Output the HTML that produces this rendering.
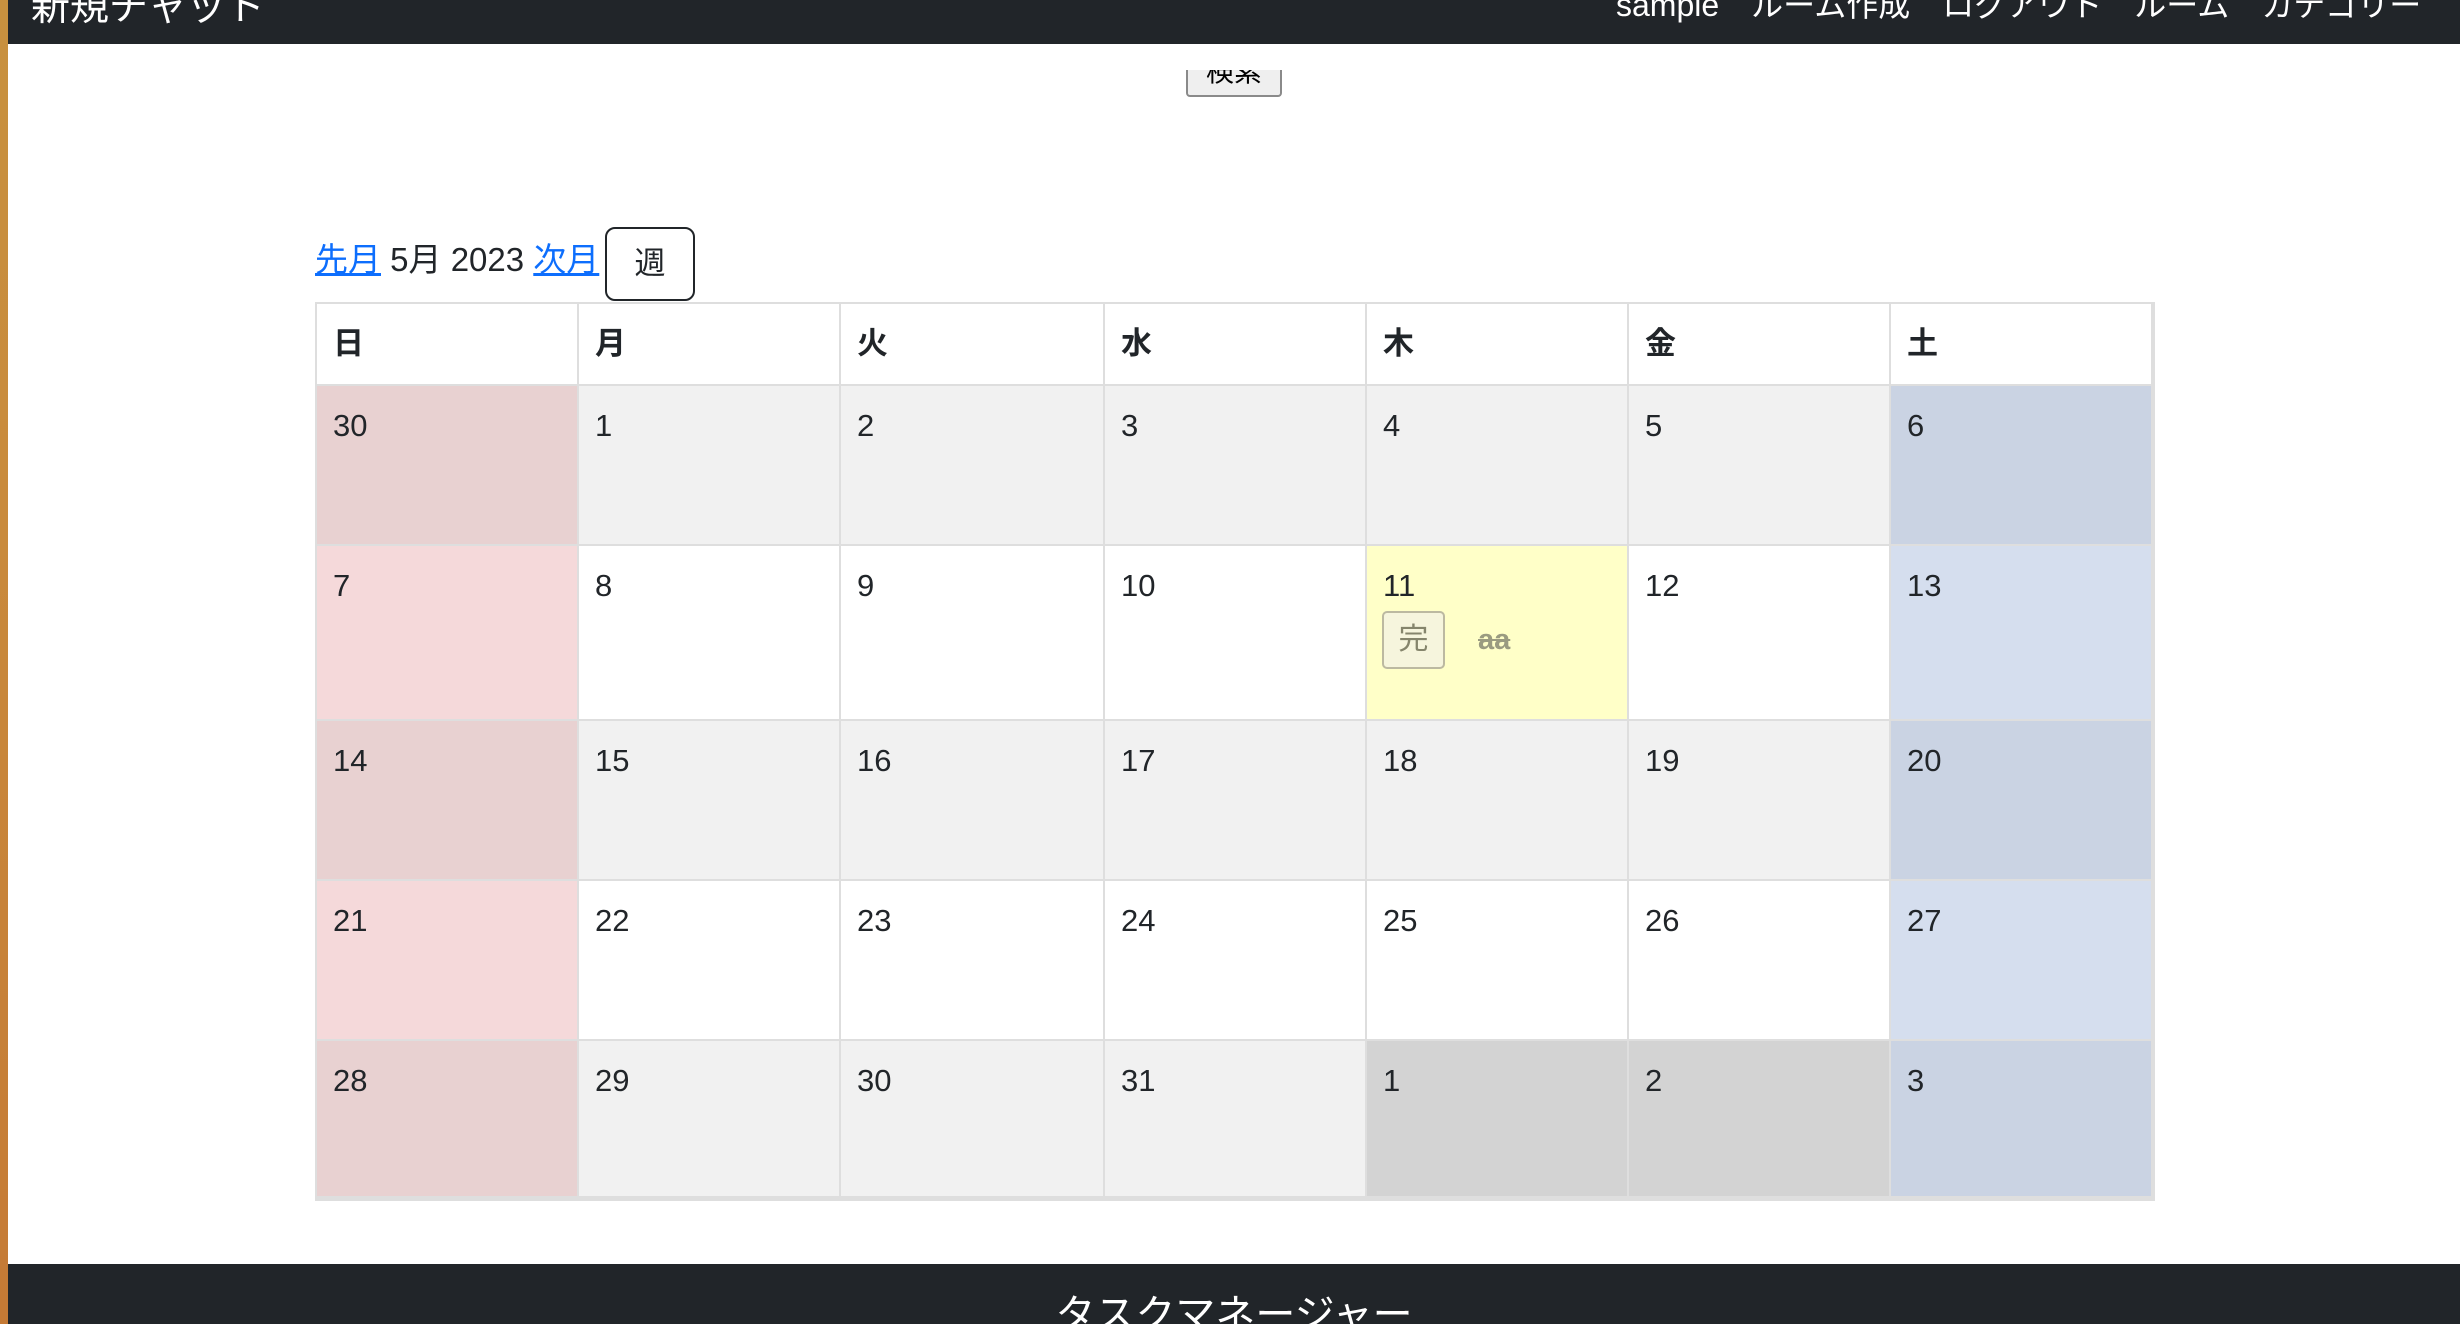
<!DOCTYPE html>
<html><head><meta charset="utf-8"><style>
*{margin:0;padding:0;box-sizing:border-box}
body{width:2460px;height:1324px;overflow:hidden;background:#fff;font-family:"Liberation Sans","Noto Sans CJK JP",sans-serif;color:#212529;position:relative}
.strip{position:absolute;left:0;top:0;width:8px;height:1324px;background:linear-gradient(#c8913f,#c98a3c 40%,#c57a35)}
.nav{position:absolute;left:8px;top:0;right:0;height:44px;background:#212529;color:#fff;font-size:32px;overflow:hidden}
.nav .brand{position:absolute;left:23px;top:-24px;font-size:39px}
.nav .links{position:absolute;left:1608px;top:-20px;white-space:nowrap}
.nav .links span{margin-right:32px}
.srch{position:absolute;left:1186px;top:70px;width:96px;height:27px;overflow:hidden}
.srch div{position:absolute;left:0;top:-20px;width:96px;height:47px;background:#efefef;border:2px solid #8a8a8a;border-radius:4px;font-size:28px;text-align:center;line-height:40px;color:#000}
.mnav{position:absolute;left:315px;top:240px;font-size:33px;line-height:40px}
.mnav a{color:#0d6efd;text-decoration:underline}
.wk{position:absolute;left:605px;top:227px;width:90px;height:74px;border:2px solid #212529;border-radius:10px;font-size:31px;text-align:center;line-height:70px;background:#fff}
.tbl{position:absolute;left:315px;top:302px;width:1840px;height:899px;background:#dedede}
.c{position:absolute;padding:0 0 0 16px;font-size:31px}
.h{font-weight:bold}
.ev{position:absolute;left:1382px;top:611px;width:63px;height:58px;background:#f6f5dd;border:2px solid #bcb9a1;border-radius:5px;color:#85856c;font-size:30px;text-align:center;line-height:54px}
.aa{position:absolute;left:1478px;top:624px;color:#9a9b80;font-size:29px;font-weight:bold;text-decoration:line-through}
.foot{position:absolute;left:8px;top:1264px;right:0;height:60px;background:#212529;color:#fff;font-size:40px;text-align:center;padding-top:18px}
</style></head><body>
<div class="strip"></div>
<div class="nav"><div class="brand">新規チャット</div><div class="links"><span>sample</span><span>ルーム作成</span><span>ログアウト</span><span>ルーム</span><span>カテゴリー</span></div></div>
<div class="srch"><div>検索</div></div>
<div class="mnav"><a>先月</a> 5月 2023 <a>次月</a></div>
<div class="wk">週</div>
<div class="tbl"></div>
<div id="cells"></div>
<div class="ev">完</div>
<div class="aa">aa</div>
<div class="foot">タスクマネージャー</div>
<script>
var xs=[317,579,841,1105,1367,1629,1891,2153];
var ys=[304,386,546,721,881,1041,1198];
var hdr=["日","月","火","水","木","金","土"];
var d=[[30,1,2,3,4,5,6],[7,8,9,10,11,12,13],[14,15,16,17,18,19,20],[21,22,23,24,25,26,27],[28,29,30,31,1,2,3]];
var h='';
for(var c=0;c<7;c++){h+='<div class="c h" style="left:'+xs[c]+'px;top:'+ys[0]+'px;width:'+(xs[c+1]-xs[c]-2)+'px;height:'+(ys[1]-ys[0]-2)+'px;background:#fff;padding-top:20px;line-height:40px">'+hdr[c]+'</div>';}
for(var r=0;r<5;r++){for(var c=0;c<7;c++){var g=(r%2==0);var bg=g?'#f1f1f1':'#fff';
if(c==0)bg=g?'#e8d1d1':'#f5d9da';if(c==6)bg=g?'#cad3e3':'#d5deee';
if(r==4&&(c==4||c==5))bg='#d3d3d3';if(r==1&&c==4)bg='#ffffc8';
h+='<div class="c" style="left:'+xs[c]+'px;top:'+ys[r+1]+'px;width:'+(xs[c+1]-xs[c]-2)+'px;height:'+(ys[r+2]-ys[r+1]-2)+'px;background:'+bg+';padding-top:20px;line-height:40px">'+d[r][c]+'</div>';}}
document.getElementById('cells').innerHTML=h;
</script>
</body></html>
